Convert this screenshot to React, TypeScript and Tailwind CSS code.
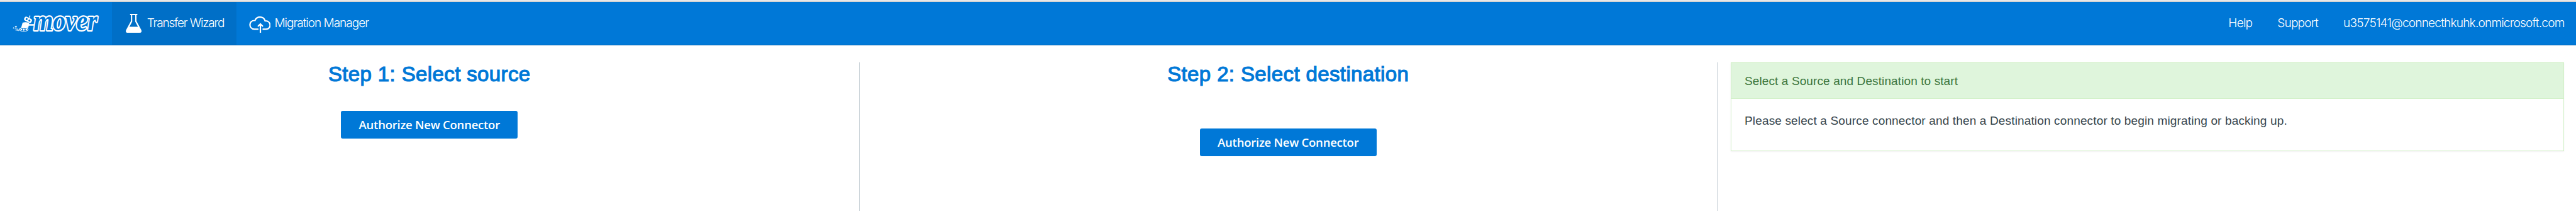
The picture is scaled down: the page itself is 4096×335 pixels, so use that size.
import React from "react";

function Logo() {
  return (
    <svg className="block h-[27.7px] w-[137.4px] overflow-visible" viewBox="90 100 605 122" role="img" aria-label="mover">
      <g fill="none" stroke="#fff" strokeWidth="3">
        <path d="M102 194l34 18M106 208l28 6M118 196l16 14" />
      </g>
      <path fill="#fff" d="M113 177l3 6 6 3-6 3-3 6-3-6-6-3 6-3zM96 188l2 4 4 2-4 2-2 4-2-4-4-2 4-2z" />
      <path fill="#fff" d="M160 157q22-8 46 2l-1 8h40v11h-42l-3 14h-50z" />
      <g transform="rotate(28 198 137)">
        <rect x="170" y="122" width="56" height="30" rx="12" fill="#fff" />
        <circle cx="187" cy="137" r="7" fill="#0078d7" />
        <circle cx="209" cy="137" r="7" fill="#0078d7" />
      </g>
      <path d="M205 124l6-13" stroke="#fff" strokeWidth="5" />
      <circle cx="211" cy="111" r="4" fill="#fff" />
      <ellipse cx="168" cy="205" rx="33" ry="15" fill="#fff" />
      <ellipse cx="168" cy="206" rx="28" ry="10" fill="#0078d7" />
      <circle cx="151" cy="206" r="6" fill="#fff" />
      <circle cx="168" cy="206" r="7" fill="#fff" />
      <circle cx="186" cy="206" r="6" fill="#fff" />
      <text
        x="237"
        y="208"
        fontFamily="Liberation Serif, serif"
        fontWeight="700"
        fontStyle="italic"
        fontSize="206"
        textLength="446"
        lengthAdjust="spacingAndGlyphs"
        fill="#0078d7"
        stroke="#fff"
        strokeWidth="20"
        strokeLinejoin="round"
        paintOrder="stroke"
      >
        mover
      </text>
    </svg>
  );
}

function FlaskIcon() {
  return (
    <svg className="block h-[30px] w-[25.2px]" viewBox="0 0 37 44">
      <path fill="#fff" fillRule="evenodd" d="M10 0h17v3h-2v14l11 20q3 7-4 7H5q-7 0-4-7l11-20V3h-2zM15 3v15L8.500 30h20L22 18V3z" />
    </svg>
  );
}

function CloudUploadIcon() {
  return (
    <svg className="block h-[25.9px] w-[34.4px]" viewBox="0 0 50.500 38" fill="none" stroke="#fff" strokeWidth="3.200">
      <path d="M22 30H12C-1.500 29-1.500 9 14 9.500C18-1 34-1 37.500 10.500C52 10 53 29 40 30H31.500" />
      <path d="M26.500 38V18M20.500 23.500l6-6 6 6" />
    </svg>
  );
}

function AuthorizeButton() {
  return (
    <button className="flex h-[43.600px] w-[281px] items-center justify-center rounded-[3px] bg-[#0078d7] font-['Open_Sans',sans-serif] text-[18.5px] font-semibold tracking-[-0.24px] text-white">
      <span className="whitespace-nowrap">Authorize New Connector</span>
    </button>
  );
}

function StepTitle({ children }: { children: React.ReactNode }) {
  return (
    <h1 className="text-[33px] leading-[38px] tracking-[0.38px] whitespace-nowrap text-[#0078d7] [-webkit-text-stroke:1.2px_#0078d7]">
      {children}
    </h1>
  );
}

export default function App() {
  return (
    <div className="flex h-[335px] w-[4096px] flex-col overflow-hidden bg-white font-['Liberation_Sans',Arial,sans-serif] text-[19.07px]">
      <div className="h-[3px] border-b-2 border-[#d6d6d6] bg-[#f0f0f0]" />
      <header className="flex h-[69px] items-stretch border-b border-[#0063b1] bg-[#0078d7] font-['Inter',sans-serif] font-light text-white">
        <div className="w-[178px] pt-[20.200px] pl-[20.400px]">
          <Logo />
        </div>
        <nav className="flex">
          <a className="flex w-[198px] bg-[#006fc7] pl-[22px]">
            <span className="pt-[19px]"><FlaskIcon /></span>
            <span className="pt-[22px] pl-[8.500px] leading-[24px] tracking-[-1.2px] whitespace-nowrap">Transfer Wizard</span>
          </a>
          <a className="flex pl-[20px]">
            <span className="pt-[23px]"><CloudUploadIcon /></span>
            <span className="pt-[22px] pl-[6px] leading-[24px] tracking-[-1.03px] whitespace-nowrap">Migration Manager</span>
          </a>
        </nav>
        <nav className="ml-auto flex gap-[40px] pt-[22px] pr-[18.500px] leading-[24px] tracking-[-0.8px] whitespace-nowrap">
          <a>Help</a>
          <a>Support</a>
          <a>u3575141@connecthkuhk.onmicrosoft.com</a>
        </nav>
      </header>
      <main className="flex flex-1 pt-[27px]">
        <section className="flex w-[1366.500px] flex-col items-center border-r border-[#c5ced4]">
          <StepTitle>Step 1: Select source</StepTitle>
          <div className="pt-[39px]"><AuthorizeButton /></div>
        </section>
        <section className="flex w-[1364.500px] flex-col items-center border-r border-[#c5ced4]">
          <StepTitle>Step 2: Select destination</StepTitle>
          <div className="pt-[67px]"><AuthorizeButton /></div>
        </section>
        <section className="flex-1 pr-[19px] pl-[21px]">
          <div className="h-[141px] border border-[#d2f0c8] shadow-[0_1px_2px_rgba(0,0,0,0.06)]">
            <div className="flex h-[57px] items-center border-b border-[#d2f0c8] bg-[#dff5dc] pt-[2px] pl-[21px] text-[#3c763d]">
              <span className="tracking-[0.08px] whitespace-nowrap">Select a Source and Destination to start</span>
            </div>
            <p className="pt-[22px] pl-[21px] leading-[26px] tracking-[0.12px] whitespace-nowrap text-[#36454c]">
              Please select a Source connector and then a Destination connector to begin migrating or backing up.
            </p>
          </div>
        </section>
      </main>
    </div>
  );
}
